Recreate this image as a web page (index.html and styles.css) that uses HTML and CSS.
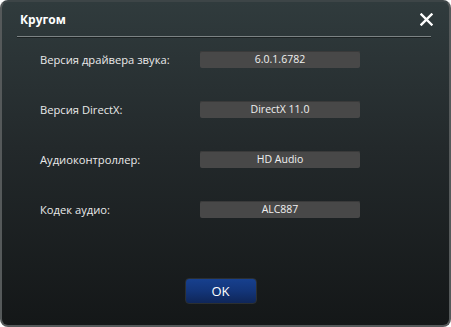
FILE: index.html
```html
<html lang="ru">
<head>
    <meta charset="UTF-8">
    <title>Кругом</title>
    <link rel="stylesheet" href="styles.css">
</head>
<body>
    <div class="window">
        <div class="titlebar">
            <span class="title">Кругом</span>
            <svg class="closebtn" width="13" height="13" viewBox="0 0 13 13">
                <path d="M1.5 1.5 L11.5 11.5 M11.5 1.5 L1.5 11.5" stroke="#fff" stroke-width="2.4" stroke-linecap="square"/>
            </svg>
        </div>
        <div class="sep"></div>
        <div class="rows">
            <div class="row">
                <span class="label">Версия драйвера звука:</span>
                <span class="value">6.0.1.6782</span>
            </div>
            <div class="row">
                <span class="label">Версия DirectX:</span>
                <span class="value">DirectX 11.0</span>
            </div>
            <div class="row">
                <span class="label">Аудиоконтроллер:</span>
                <span class="value">HD Audio</span>
            </div>
            <div class="row">
                <span class="label">Кодек аудио:</span>
                <span class="value">ALC887</span>
            </div>
        </div>
        <div class="footer">
            <button class="okbtn">OK</button>
        </div>
    </div>
</body>
</html>
```

FILE: styles.css
```css
* {
  box-sizing: border-box;
}

body {
  margin: 0;
  background: #fff;
  font-family: "Open Sans", "Noto Sans", sans-serif;
}

.window {
  width: 451px;
  height: 327px;
  border: 2px solid #55595a;
  border-top-color: #3d4547;
  border-radius: 8px;
  background: linear-gradient(to bottom, #303b3d 0%, #23292b 45%, #141718 100%);
  display: flex;
  flex-direction: column;
}

.titlebar {
  display: flex;
  align-items: center;
  justify-content: space-between;
  height: 34px;
  padding: 0 16px 0 18px;
}

.title {
  color: #fff;
  font-weight: bold;
  font-size: 12px;
}

.closebtn {
  display: block;
}

.sep {
  height: 2px;
  margin: 0 18px 0 15px;
  border-top: 1px solid #7c8384;
  border-bottom: 1px solid #1c2223;
}

.rows {
  display: flex;
  flex-direction: column;
  gap: 33px;
  padding: 13px 0 0 38px;
}

.row {
  display: flex;
  align-items: center;
  height: 17px;
}

.label {
  width: 160px;
  color: #eaeaea;
  font-size: 11.2px;
}

.value {
  width: 160px;
  height: 17px;
  line-height: 17px;
  background: #484848;
  border-radius: 2px;
  box-shadow: inset 0 1px 0 #3a3a3a;
  color: #f0f0f0;
  font-size: 10.5px;
  text-align: center;
}

.footer {
  margin-top: auto;
  display: flex;
  justify-content: center;
  padding-bottom: 21px;
}

.okbtn {
  width: 72px;
  height: 26px;
  margin-right: 10px;
  border: 1px solid #2b2f31;
  border-radius: 4px;
  background: linear-gradient(to bottom, #17408e 0%, #133579 50%, #0f2658 100%);
  color: #fff;
  font-family: "Open Sans", "Noto Sans", sans-serif;
  font-size: 13px;
}
```
